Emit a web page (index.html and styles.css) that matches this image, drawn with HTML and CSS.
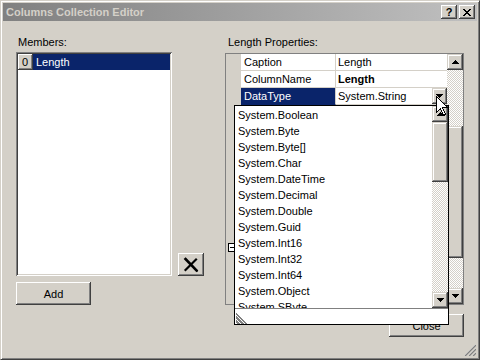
FILE: index.html
```html
<!DOCTYPE html>
<html>
<head>
<meta charset="utf-8">
<link rel="stylesheet" href="styles.css">
</head>
<body>
<div class="window">
  <div class="titlebar">
    <span class="title">Columns Collection Editor</span>
    <div class="caption-btns">
      <span class="cbtn help">?</span>
      <span class="cbtn">
        <svg width="8" height="7" viewBox="0 0 8 7" shape-rendering="crispEdges">
          <rect x="0" y="0" width="2" height="1"/><rect x="6" y="0" width="2" height="1"/>
          <rect x="1" y="1" width="2" height="1"/><rect x="5" y="1" width="2" height="1"/>
          <rect x="2" y="2" width="4" height="1"/>
          <rect x="3" y="3" width="2" height="1"/>
          <rect x="2" y="4" width="4" height="1"/>
          <rect x="1" y="5" width="2" height="1"/><rect x="5" y="5" width="2" height="1"/>
          <rect x="0" y="6" width="2" height="1"/><rect x="6" y="6" width="2" height="1"/>
        </svg>
      </span>
    </div>
  </div>

  <div class="client">
    <div class="col-members">
      <div class="label">Members:</div>
      <div class="listbox">
        <div class="lrow"><span class="lhead">0</span><span class="lsel">Length</span></div>
      </div>
      <div class="btn add">Add</div>
    </div>

    <div class="col-mid">
      <div class="btn del">
        <svg width="16" height="16" viewBox="0 0 16 16">
          <path d="M2.5 2 L13.5 13.5" stroke="#000" stroke-width="2.6" stroke-linecap="square"/>
          <path d="M13 2.5 L2.5 13" stroke="#000" stroke-width="2.2" stroke-linecap="square"/>
          <path d="M12 12 L14.5 14.5" stroke="#000" stroke-width="1.2"/>
        </svg>
      </div>
    </div>

    <div class="col-props">
      <div class="label">Length Properties:</div>
      <div class="pgrid">
        <div class="pbody">
          <div class="prow"><span class="pname">Caption</span><span class="pval">Length</span></div>
          <div class="prow"><span class="pname">ColumnName</span><span class="pval bold">Length</span></div>
          <div class="prow"><span class="pname sel">DataType</span><span class="pval">System.String<span class="ddbtn"><svg width="7" height="4" viewBox="0 0 7 4" shape-rendering="crispEdges"><rect x="0" y="0" width="7" height="1"/><rect x="1" y="1" width="5" height="1"/><rect x="2" y="2" width="3" height="1"/><rect x="3" y="3" width="1" height="1"/></svg></span></span></div>
          <div class="pcat"><span class="expander"><span class="minus"></span></span></div>
        </div>
        <div class="vscroll">
          <div class="sbtn"><svg width="7" height="4" viewBox="0 0 7 4" shape-rendering="crispEdges"><rect x="3" y="0" width="1" height="1"/><rect x="2" y="1" width="3" height="1"/><rect x="1" y="2" width="5" height="1"/><rect x="0" y="3" width="7" height="1"/></svg></div>
          <div class="track t1"></div>
          <div class="thumb th1"></div>
          <div class="track t2"></div>
          <div class="sbtn"><svg width="7" height="4" viewBox="0 0 7 4" shape-rendering="crispEdges"><rect x="0" y="0" width="7" height="1"/><rect x="1" y="1" width="5" height="1"/><rect x="2" y="2" width="3" height="1"/><rect x="3" y="3" width="1" height="1"/></svg></div>
        </div>
      </div>
      <div class="close-row"><div class="btn closebtn">Close</div></div>
    </div>
  </div>

  <div class="dropdown">
    <div class="dd-list">
      <div class="dd-items">
        <div class="dd-item">System.Boolean</div>
        <div class="dd-item">System.Byte</div>
        <div class="dd-item">System.Byte[]</div>
        <div class="dd-item">System.Char</div>
        <div class="dd-item">System.DateTime</div>
        <div class="dd-item">System.Decimal</div>
        <div class="dd-item">System.Double</div>
        <div class="dd-item">System.Guid</div>
        <div class="dd-item">System.Int16</div>
        <div class="dd-item">System.Int32</div>
        <div class="dd-item">System.Int64</div>
        <div class="dd-item">System.Object</div>
        <div class="dd-item">System.SByte</div>
      </div>
      <div class="vscroll dd-scroll">
        <div class="sbtn"><svg width="7" height="4" viewBox="0 0 7 4" shape-rendering="crispEdges"><rect x="3" y="0" width="1" height="1"/><rect x="2" y="1" width="3" height="1"/><rect x="1" y="2" width="5" height="1"/><rect x="0" y="3" width="7" height="1"/></svg></div>
        <div class="thumb th2"></div>
        <div class="track t3"></div>
        <div class="sbtn"><svg width="7" height="4" viewBox="0 0 7 4" shape-rendering="crispEdges"><rect x="0" y="0" width="7" height="1"/><rect x="1" y="1" width="5" height="1"/><rect x="2" y="2" width="3" height="1"/><rect x="3" y="3" width="1" height="1"/></svg></div>
      </div>
    </div>
    <div class="dd-foot">
      <svg width="12" height="12" viewBox="0 0 12 12" shape-rendering="crispEdges" class="dd-grip">
        <path d="M0 1.5 L10.5 12" stroke="#808080"/>
        <path d="M0 4.5 L7.5 12" stroke="#808080"/>
        <path d="M0 5.5 L6.5 12" stroke="#808080"/>
        <path d="M0 8.5 L3.5 12" stroke="#808080"/>
        <path d="M0 9.5 L2.5 12" stroke="#808080"/>
      </svg>
    </div>
  </div>

  <svg class="cursor" width="13" height="21" viewBox="0 0 13 21" shape-rendering="crispEdges">
    <path d="M0.5 0.5 L0.5 16.5 L4.5 12.5 L7.5 19.5 L9.5 18.5 L6.5 11.5 L11.5 11.5 Z" fill="#fff" stroke="#000" stroke-width="1"/>
  </svg>

  <svg class="grip" width="12" height="12" viewBox="0 0 12 12">
    <path d="M11.5 0.5 L0.5 11.5" stroke="#fff"/>
    <path d="M12 1 L1 12" stroke="#808080" stroke-width="1.4"/>
    <path d="M11.5 4.5 L4.5 11.5" stroke="#fff"/>
    <path d="M12 5 L5 12" stroke="#808080" stroke-width="1.4"/>
    <path d="M11.5 8.5 L8.5 11.5" stroke="#fff"/>
    <path d="M12 9 L9 12" stroke="#808080" stroke-width="1.4"/>
  </svg>
</div>
</body>
</html>
```

FILE: styles.css
```css
* { box-sizing: border-box; }
html, body { margin: 0; padding: 0; }
body {
  font: 11px "Liberation Sans", Arial, sans-serif;
  color: #000;
  background: #d4d0c8;
}
.window {
  position: relative;
  width: 480px;
  height: 360px;
  background: #d4d0c8;
  border: 1px solid;
  border-color: #d4d0c8 #404040 #404040 #d4d0c8;
  box-shadow: inset 1px 1px #fff, inset -1px -1px #808080;
  padding: 2px;
  display: flex;
  flex-direction: column;
  overflow: hidden;
}
.titlebar {
  height: 18px;
  flex: none;
  display: flex;
  align-items: center;
  background: linear-gradient(to right, #808080, #c0c0c0);
  padding-left: 3px;
  padding-right: 2px;
}
.title {
  font-weight: bold;
  color: #d4d0c8;
  flex: 1;
  white-space: nowrap;
}
.caption-btns { display: flex; gap: 2px; }
.cbtn {
  width: 16px;
  height: 14px;
  background: #d4d0c8;
  box-shadow: inset -1px -1px #404040, inset 1px 1px #fff, inset -2px -2px #808080;
  display: flex;
  align-items: center;
  justify-content: center;
  font-weight: bold;
  font-size: 11px;
  line-height: 14px;
}
.cbtn svg { margin-left: -1px; }
.help { padding-top: 0; }

.client {
  flex: 1;
  display: flex;
  padding: 15px 0 0 13px;
}
.label { height: 13px; line-height: 13px; padding-left: 2px; white-space: nowrap; }
.col-members { width: 156px; display: flex; flex-direction: column; }
.listbox {
  margin-top: 3px;
  height: 224px;
  background: #fff;
  padding: 2px;
  box-shadow: inset 1px 1px #808080, inset -1px -1px #fff, inset 2px 2px #404040, inset -2px -2px #d4d0c8;
}
.lrow { display: flex; height: 16px; }
.lhead {
  width: 15px;
  background: #d4d0c8;
  box-shadow: inset -1px -1px #404040, inset 1px 1px #fff, inset -2px -2px #808080;
  line-height: 16px;
  padding-left: 4px;
}
.lsel {
  flex: 1;
  background: #0a246a;
  color: #fff;
  line-height: 16px;
  padding-left: 3px;
}
.btn {
  background: #d4d0c8;
  box-shadow: inset -1px -1px #404040, inset 1px 1px #fff, inset -2px -2px #808080;
  display: flex;
  align-items: center;
  justify-content: center;
}
.add { margin-top: 6px; width: 75px; height: 23px; }
.col-mid { margin-left: 6px; padding-top: 217px; }
.del { width: 26px; height: 23px; }

.col-props { margin-left: 21px; width: 239px; display: flex; flex-direction: column; }
.col-props .label { padding-left: 3px; }
.pgrid {
  margin-top: 4px;
  height: 252px;
  border: 1px solid #808080;
  display: flex;
  background: #d4d0c8;
}
.pbody { flex: 1; display: flex; flex-direction: column; }
.prow {
  height: 17px;
  display: flex;
  padding-left: 15px;
}
.pname, .pval {
  height: 17px;
  line-height: 16px;
  background: #fff;
  border-bottom: 1px solid #d4d0c8;
  white-space: nowrap;
}
.pname { width: 95px; padding-left: 3px; border-right: 1px solid #d4d0c8; }
.pname.sel { background: #0a246a; color: #fff; border-bottom-color: #0a246a; }
.pval { flex: 1; padding-left: 2px; display: flex; }
.bold { font-weight: bold; }
.ddbtn {
  margin-left: auto;
  width: 15px;
  height: 16px;
  background: #d4d0c8;
  box-shadow: inset -1px -1px #404040, inset 1px 1px #d4d0c8, inset -2px -2px #808080, inset 2px 2px #fff;
  display: flex;
  align-items: center;
  justify-content: center;
}
.pcat {
  margin-top: 134px;
  height: 17px;
  display: flex;
  align-items: center;
  padding-left: 2px;
}
.expander {
  width: 9px;
  height: 9px;
  border: 1px solid #000;
  background: #fff;
  display: flex;
  align-items: center;
  justify-content: center;
}
.minus { width: 5px; height: 1px; background: #000; }

.vscroll { width: 16px; display: flex; flex-direction: column; }
.sbtn {
  height: 16px;
  flex: none;
  background: #d4d0c8;
  box-shadow: inset -1px -1px #404040, inset 1px 1px #d4d0c8, inset -2px -2px #808080, inset 2px 2px #fff;
  display: flex;
  align-items: center;
  justify-content: center;
}
.thumb {
  flex: none;
  background: #d4d0c8;
  box-shadow: inset -1px -1px #404040, inset 1px 1px #d4d0c8, inset -2px -2px #808080, inset 2px 2px #fff;
}
.track {
  background-color: #fff;
  background-image: repeating-conic-gradient(#d4d0c8 0 25%, #fff 0 50%);
  background-size: 2px 2px;
}
.t1 { height: 56px; }
.th1 { height: 132px; }
.t2 { flex: 1; }
.th2 { height: 60px; }
.t3 { flex: 1; }

.close-row { margin-top: 9px; display: flex; justify-content: flex-end; }
.closebtn { width: 75px; height: 23px; }

.dropdown {
  position: absolute;
  left: 233px;
  top: 104px;
  width: 215px;
  height: 220px;
  border: 1px solid #000;
  background: #fff;
  display: flex;
  flex-direction: column;
}
.dd-list { height: 202px; display: flex; }
.dd-items { flex: 1; overflow: hidden; padding: 1px 0 0 3px; }
.dd-item { height: 16px; line-height: 16px; white-space: nowrap; }
.dd-foot {
  flex: 1;
  border-top: 1px solid #808080;
  position: relative;
}
.dd-grip { position: absolute; left: 1px; bottom: 0; }

.cursor { position: absolute; left: 435px; top: 95px; }
.grip { position: absolute; right: 3px; bottom: 3px; }
```
